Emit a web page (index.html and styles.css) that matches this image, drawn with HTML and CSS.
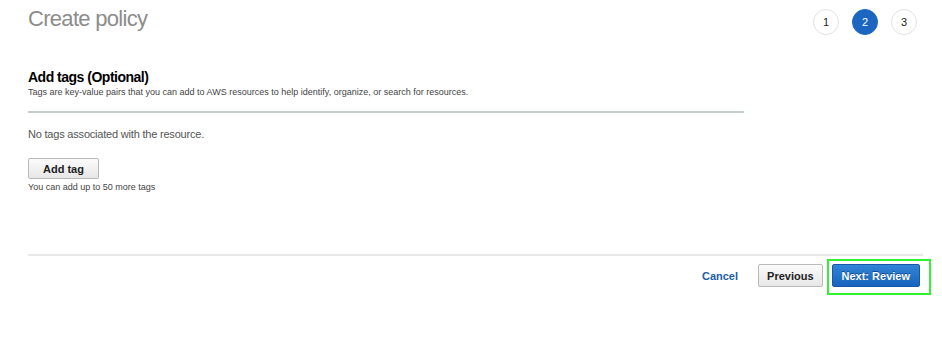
FILE: index.html
```html
<!DOCTYPE html>
<html lang="en">
<head>
  <meta charset="UTF-8" />
  <meta name="viewport" content="width=device-width, initial-scale=1.0"/>
  <title>Create policy</title>
  <link rel="stylesheet" href="styles.css">
</head>
<body>

  <div class="page">
    <header class="top">
      <h1 class="title">Create policy</h1>
      <ol class="steps">
        <li>1</li>
        <li class="current">2</li>
        <li>3</li>
      </ol>
    </header>

    <section class="tags">
      <div class="tags-head">
        <h2>Add tags (Optional)</h2>
        <p class="hint">Tags are key-value pairs that you can add to AWS resources to help identify, organize, or search for resources.</p>
      </div>
      <p class="empty">No tags associated with the resource.</p>
      <button class="btn add">Add tag</button>
      <p class="limit">You can add up to 50 more tags</p>
    </section>

    <footer class="actions">
      <a class="cancel" href="#">Cancel</a>
      <button class="btn">Previous</button>
      <span class="marked"><button class="btn primary">Next: Review</button></span>
    </footer>
  </div>

</body>
</html>
```

FILE: styles.css
```css
* {
  margin: 0;
  padding: 0;
  box-sizing: border-box;
  font-family: 'Liberation Sans', Arial, sans-serif;
}

body {
  background: #fff;
  color: #16191f;
}

.page {
  min-height: 100vh;
  padding: 0 19px 0 28px;
}

.top {
  display: flex;
  justify-content: space-between;
  align-items: flex-start;
  padding-top: 5px;
}

.title {
  font-size: 22px;
  line-height: 28px;
  font-weight: normal;
  color: #8c8c8c;
  letter-spacing: -0.7px;
}

.steps {
  list-style: none;
  display: flex;
  gap: 13px;
  margin: 4px 6px 0 0;
}

.steps li {
  width: 26px;
  height: 26px;
  border: 1px solid #e2e2e2;
  border-radius: 50%;
  display: flex;
  align-items: center;
  justify-content: center;
  font-size: 11px;
  color: #222;
}

.steps li.current {
  background: #1b66c1;
  border-color: #1b66c1;
  color: #fff;
}

.tags {
  width: 716px;
}

.tags-head {
  margin-top: 36px;
  padding-bottom: 14px;
  border-bottom: 2px solid #c6cfcf;
}

.tags h2 {
  font-size: 14px;
  line-height: 13px;
  letter-spacing: -0.5px;
  color: #000;
}

.hint {
  margin-top: 3px;
  font-size: 9px;
  line-height: 10px;
  color: #444;
}

.empty {
  margin-top: 15px;
  font-size: 11px;
  line-height: 13px;
  letter-spacing: -0.2px;
  color: #555;
}

.btn {
  height: 21px;
  padding: 0 8px;
  border: 1px solid #b9b9b9;
  border-radius: 2px;
  background: linear-gradient(to bottom, #fbfbfb, #e7e7e7);
  font-size: 11px;
  font-weight: bold;
  color: #222;
  cursor: pointer;
}

.add {
  display: block;
  margin-top: 17px;
  padding: 0 14px;
}

.limit {
  margin-top: 3px;
  font-size: 9px;
  line-height: 11px;
  color: #444;
}

.actions {
  margin-top: 61px;
  padding: 8px 3px 0 0;
  border-top: 2px solid #e8e8e8;
  display: flex;
  justify-content: flex-end;
  align-items: center;
}

.cancel {
  font-size: 11px;
  font-weight: bold;
  color: #1a5ea8;
  text-decoration: none;
  margin-right: 20px;
}

.actions .btn {
  height: 23px;
}

.primary {
  padding: 0 9px;
  background: linear-gradient(to bottom, #3285d8, #1763bd);
  border-color: #1659a8;
  color: #fff;
  text-shadow: 0 -1px 0 #0d4a91;
}

/* green review highlight drawn over the button */
.marked {
  position: relative;
  display: flex;
  margin-left: 9px;
}

.marked::after {
  content: "";
  position: absolute;
  top: -5px;
  right: -11px;
  bottom: -8px;
  left: -5px;
  border: 2px solid #33f033;
}
```
